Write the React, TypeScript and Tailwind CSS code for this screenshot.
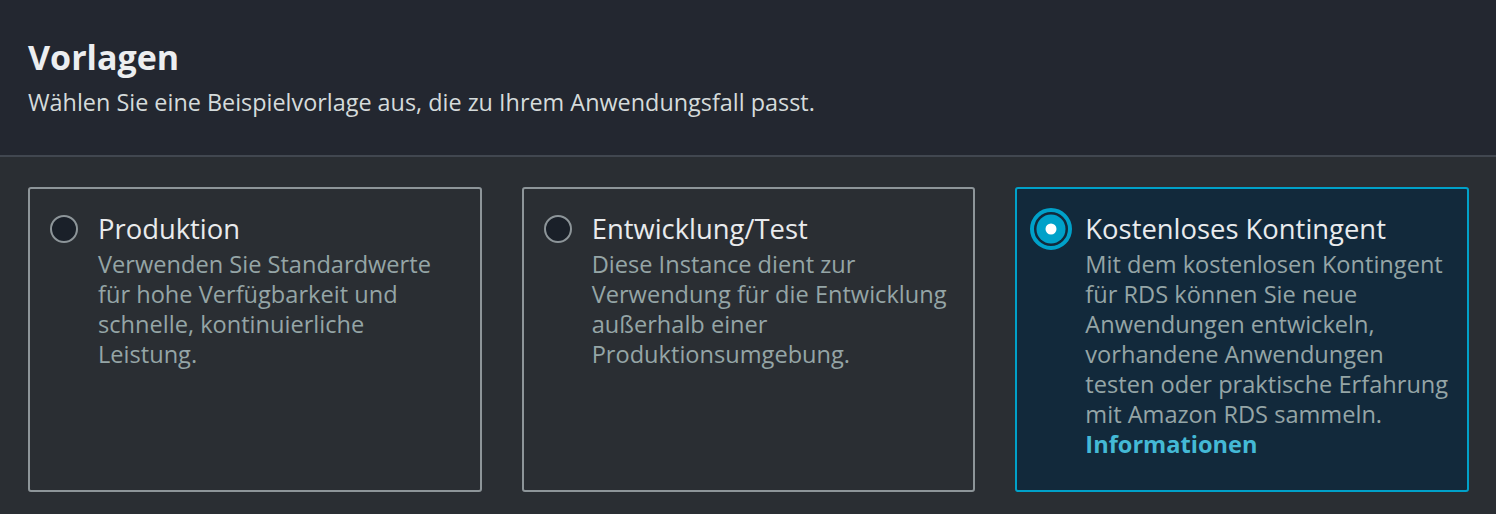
import React, { useState } from 'react';

interface TemplateOption {
  id: string;
  title: string;
  description: string;
  link?: string;
}

const options: TemplateOption[] = [
  {
    id: 'prod',
    title: 'Produktion',
    description: 'Verwenden Sie Standardwerte für hohe Verfügbarkeit und schnelle, kontinuierliche Leistung.',
  },
  {
    id: 'dev',
    title: 'Entwicklung/Test',
    description: 'Diese Instance dient zur Verwendung für die Entwicklung außerhalb einer Produktionsumgebung.',
  },
  {
    id: 'free',
    title: 'Kostenloses Kontingent',
    description:
      'Mit dem kostenlosen Kontingent für RDS können Sie neue Anwendungen entwickeln, vorhandene Anwendungen testen oder praktische Erfahrung mit Amazon RDS sammeln.',
    link: 'Informationen',
  },
];

// selected radio also carries the focus ring drawn outside its box
const Radio: React.FC<{ checked: boolean }> = ({ checked }) => (
  <svg width="28" height="28" viewBox="0 0 28 28" className="shrink-0 mt-[6px] overflow-visible">
    {checked ? (
      <>
        <circle cx="14" cy="14" r="19" fill="none" stroke="#00a1c9" strokeWidth="4" />
        <circle cx="14" cy="14" r="14.5" fill="#00a1c9" />
        <circle cx="14" cy="14" r="5.5" fill="#ffffff" />
      </>
    ) : (
      <circle cx="14" cy="14" r="13" fill="#1a2029" stroke="#8d9599" strokeWidth="2" />
    )}
  </svg>
);

const App: React.FC = () => {
  const [selected, setSelected] = useState('free');

  return (
    <div className="w-[1496px] h-[514px] bg-[#2a2e33] font-['Open_Sans',sans-serif] overflow-hidden">
      <div className="bg-[#232730] border-b-2 border-[#414750] h-[157px] pl-[28px] pt-[35px]">
        <h1 className="text-[34px] leading-[44px] font-bold text-[#eceef0]">Vorlagen</h1>
        <p className="text-[23.4px] leading-[30px] text-[#d5dbdb] mt-[8px]">
          Wählen Sie eine Beispielvorlage aus, die zu Ihrem Anwendungsfall passt.
        </p>
      </div>

      <div className="grid grid-cols-3 gap-[40px] pl-[28px] pr-[27px] pt-[30px]">
        {options.map((o) => {
          const active = selected === o.id;
          return (
            <button
              key={o.id}
              onClick={() => setSelected(o.id)}
              className={`flex gap-[20px] text-left rounded-[3px] border-2 pt-[20px] pl-[20px] pr-[12px] pb-[31px] ${
                active ? 'border-[#00a1c9] bg-[#12293b]' : 'border-[#8d9599] bg-[#2a2e33]'
              }`}
            >
              <Radio checked={active} />
              <div className="flex flex-col">
                <span className="text-[27.4px] leading-[40px] text-[#e9ebed]">{o.title}</span>
                <span className="text-[23.6px] leading-[30px] text-[#95a5a6]">{o.description}</span>
                {o.link && (
                  <span className="text-[23.6px] leading-[30px] font-bold text-[#44b9d6]">{o.link}</span>
                )}
              </div>
            </button>
          );
        })}
      </div>
    </div>
  );
};

export default App;
